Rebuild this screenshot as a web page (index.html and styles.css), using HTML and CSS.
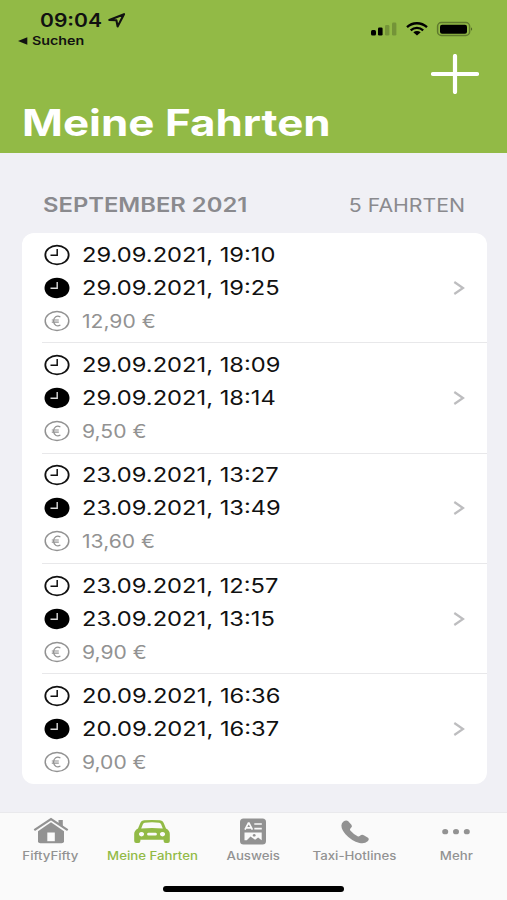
FILE: index.html
```
<!DOCTYPE html>
<html lang="de">
<head>
  <meta charset="UTF-8">
  <meta name="viewport" content="width=device-width, initial-scale=1.0">
  <title>Meine Fahrten</title>
  <link rel="stylesheet" href="styles.css">
</head>
<body>

  <svg class="hidden">
    <symbol id="clock" viewBox="0 0 26 22">
      <ellipse cx="13" cy="11" rx="11.7" ry="9.4" fill="none" stroke="#111" stroke-width="1.8"/>
      <path d="M13.2 5v6.200H6.500" fill="none" stroke="#111" stroke-width="1.500"/>
    </symbol>
    <symbol id="clock-full" viewBox="0 0 26 22">
      <ellipse cx="13" cy="11" rx="12.5" ry="10.2" fill="#000"/>
      <path d="M13.2 5v6.200H6.500" fill="none" stroke="#ddd" stroke-width="1.400"/>
    </symbol>
    <symbol id="euro" viewBox="0 0 26 22">
      <ellipse cx="13" cy="11" rx="11.8" ry="9.5" fill="none" stroke="#929292" stroke-width="1.5"/>
      <path d="M16.400 7C12.900 4.800 9.600 7.200 9.600 11s3.300 6.200 6.800 4M7.800 10h7M7.800 12.200h7" fill="none" stroke="#929292" stroke-width="1.200"/>
    </symbol>
    <symbol id="arrow" viewBox="0 0 12 16">
      <path d="M1.300 2l8.700 6-8.700 6" fill="none" stroke="#bdbdbf" stroke-width="2.200"/>
    </symbol>
  </svg>

  <header class="header">
    <div class="status">
      <div class="status-left">
        <div class="time">
          <span class="wide time-text">09:04</span>
          <svg width="18" height="15" viewBox="0 0 18 15"><path d="M1.300 7L16 1.200 9.600 13.400 8.400 7.300z" fill="none" stroke="#111" stroke-width="2.100" stroke-linejoin="round"/></svg>
        </div>
        <div class="back">
          <svg width="10" height="8" viewBox="0 0 10 8"><path d="M0 4L9.300.3v7.400z" fill="#111"/></svg>
          <span class="wide back-text">Suchen</span>
        </div>
      </div>
      <svg class="status-icons" width="104" height="16" viewBox="0 0 104 16">
        <rect x="1" y="9" width="5" height="5.500" rx="1.500"/>
        <rect x="8" y="6.500" width="4.600" height="8" rx="1.300"/>
        <rect x="15" y="4" width="4.400" height="10.500" rx="1.300" opacity=".2"/>
        <rect x="22" y="1.500" width="4.400" height="13" rx="1.300" opacity=".2"/>
        <g fill="none" stroke="#000" stroke-width="2.300">
          <path d="M37 6.200C42.500.9 51.300.9 57 6.200"/>
          <path d="M40.700 9.300C44.300 6.100 49.500 6.100 53.200 9.300"/>
        </g>
        <path d="M43.300 11.200Q47 8.600 50.700 11.200L47 14.600z"/>
        <rect x="67.600" y="1.600" width="32" height="12.800" rx="3.700" fill="none" stroke="#000" stroke-width="1.500" opacity=".35"/>
        <rect x="70" y="3.700" width="27" height="9" rx="2"/>
        <path d="M101 6.200q2.400 1.800 0 3.600z" opacity=".45"/>
      </svg>
    </div>
    <svg class="add" width="48" height="40" viewBox="0 0 48 40"><path d="M2 20h44M24 2v36" stroke="#fff" stroke-width="4.200" stroke-linecap="round"/></svg>
    <h1><span class="wide title-text">Meine Fahrten</span></h1>
  </header>

  <main>
    <div class="month">
      <h2><span class="wide month-text">SEPTEMBER 2021</span></h2>
      <span class="wide count">5 FAHRTEN</span>
    </div>

    <ul class="trips">
      <li class="trip">
        <div class="info">
          <div class="line"><svg><use href="#clock"/></svg><span class="wide date">29.09.2021, 19:10</span></div>
          <div class="line"><svg><use href="#clock-full"/></svg><span class="wide date">29.09.2021, 19:25</span></div>
          <div class="line"><svg><use href="#euro"/></svg><span class="wide price">12,90 €</span></div>
        </div>
        <svg class="arrow"><use href="#arrow"/></svg>
      </li>
      <li class="trip">
        <div class="info">
          <div class="line"><svg><use href="#clock"/></svg><span class="wide date">29.09.2021, 18:09</span></div>
          <div class="line"><svg><use href="#clock-full"/></svg><span class="wide date">29.09.2021, 18:14</span></div>
          <div class="line"><svg><use href="#euro"/></svg><span class="wide price">9,50 €</span></div>
        </div>
        <svg class="arrow"><use href="#arrow"/></svg>
      </li>
      <li class="trip">
        <div class="info">
          <div class="line"><svg><use href="#clock"/></svg><span class="wide date">23.09.2021, 13:27</span></div>
          <div class="line"><svg><use href="#clock-full"/></svg><span class="wide date">23.09.2021, 13:49</span></div>
          <div class="line"><svg><use href="#euro"/></svg><span class="wide price">13,60 €</span></div>
        </div>
        <svg class="arrow"><use href="#arrow"/></svg>
      </li>
      <li class="trip">
        <div class="info">
          <div class="line"><svg><use href="#clock"/></svg><span class="wide date">23.09.2021, 12:57</span></div>
          <div class="line"><svg><use href="#clock-full"/></svg><span class="wide date">23.09.2021, 13:15</span></div>
          <div class="line"><svg><use href="#euro"/></svg><span class="wide price">9,90 €</span></div>
        </div>
        <svg class="arrow"><use href="#arrow"/></svg>
      </li>
      <li class="trip">
        <div class="info">
          <div class="line"><svg><use href="#clock"/></svg><span class="wide date">20.09.2021, 16:36</span></div>
          <div class="line"><svg><use href="#clock-full"/></svg><span class="wide date">20.09.2021, 16:37</span></div>
          <div class="line"><svg><use href="#euro"/></svg><span class="wide price">9,00 €</span></div>
        </div>
        <svg class="arrow"><use href="#arrow"/></svg>
      </li>
    </ul>
  </main>

  <footer class="footer">
    <nav class="tabs">
      <a class="tab">
        <svg width="36" height="28" viewBox="0 0 36 28">
          <path d="M1.300 13.200L18 2l16.700 11.200" fill="none" stroke="currentColor" stroke-width="2.200"/>
          <path d="M25.500 3h4.300v6.900l-4.300-2.900z" fill="currentColor"/>
          <path d="M5 14.200L18 5.300l13 8.900v10q0 2-2.400 2H7.400q-2.400 0-2.400-2z" fill="currentColor"/>
          <rect x="14.300" y="15.500" width="7.500" height="8.700" fill="#fafafa"/>
        </svg>
        <span class="wide tab-text">FiftyFifty</span>
      </a>
      <a class="tab active">
        <svg width="36" height="28" viewBox="0 0 36 28">
          <path fill="currentColor" fill-rule="evenodd" d="M10 3.300Q18 2.500 26 3.300q2.700.3 3.600 2.500l2.400 5.800q3.800 2 3.800 5.500v7q0 2-2 2h-2.200q-2 0-2-2v-1.300H6.400v1.300q0 2-2 2H2.200q-2 0-2-2v-7q0-3.500 3.800-5.500l2.400-5.800Q7.300 3.600 10 3.300zM10.800 5.700Q9.500 5.900 9 7L7.200 11.400Q18 10.400 28.800 11.400L27 7Q26.500 5.900 25.200 5.700 18 5 10.800 5.700zM7.500 15a2.600 2.200 0 1 0 .01 0zM28.500 15a2.600 2.200 0 1 0 .01 0zM14.500 15.800q-1.400 0-1.400 1.400t1.400 1.400h7q1.400 0 1.400-1.400t-1.400-1.400z"/>
        </svg>
        <span class="wide tab-text">Meine Fahrten</span>
      </a>
      <a class="tab">
        <svg width="36" height="28" viewBox="0 0 36 28">
          <rect x="5" y="1.500" width="26" height="26" rx="3.500" fill="currentColor"/>
          <g fill="none" stroke="#fafafa" stroke-width="1.700">
            <path d="M10 12.600L13.400 6h.6l3.400 6.600M11.400 10.800h4.600M19.300 7h7.500M19.300 11.600h7.500"/>
          </g>
          <path fill="#fafafa" fill-rule="evenodd" d="M9.500 15.500h17.200v7.700l-3.600-2.600-3 2.100-4.600-3.200-3.700 3.700H9.500zM19.200 17a1.500 1.300 0 1 0 .01 0z"/>
        </svg>
        <span class="wide tab-text">Ausweis</span>
      </a>
      <a class="tab">
        <svg width="36" height="28" viewBox="0 0 36 28">
          <path fill="currentColor" d="M6.500 4.600Q9 2.600 11 4l3.600 4.100Q15.800 9.700 13.400 11.600 12.500 12.500 13.300 13.500 16.300 17 20.600 19.200 21.800 19.700 22.700 18.900 24.900 17.200 26.800 18.200L31 20.700Q32.700 22 30.700 24.300 27.600 27.200 22.500 26 14.400 23.800 8.500 17.200 4.500 12.600 4.400 8.500 4.500 6.200 6.500 4.600z"/>
        </svg>
        <span class="wide tab-text">Taxi-Hotlines</span>
      </a>
      <a class="tab">
        <svg width="36" height="28" viewBox="0 0 36 28">
          <g fill="currentColor">
            <ellipse cx="7.200" cy="14.700" rx="3" ry="2.600"/>
            <ellipse cx="18" cy="14.700" rx="3" ry="2.600"/>
            <ellipse cx="28.800" cy="14.700" rx="3" ry="2.600"/>
          </g>
        </svg>
        <span class="wide tab-text">Mehr</span>
      </a>
    </nav>
    <div class="home-bar"></div>
  </footer>

</body>
</html>
```
FILE: styles.css
```
* { box-sizing: border-box; }
body {
  margin: 0;
  height: 900px;
  display: flex;
  flex-direction: column;
  overflow: hidden;
  background: #f0f0f5;
  color: #111;
  font-family: Inter, "Liberation Sans", sans-serif;
}
h1, h2, ul {
  margin: 0;
  padding: 0;
}
.hidden {
  position: absolute;
  width: 0;
  height: 0;
}
/* stretched lettering */
.wide {
  display: inline-block;
  white-space: nowrap;
  transform: scaleX(1.15);
  transform-origin: left center;
}
.header {
  height: 153px;
  display: flex;
  flex-direction: column;
  background: #92ba46;
}
.status {
  display: flex;
  justify-content: space-between;
  height: 54px;
  padding: 9px 33px 0 18px;
}
.time {
  display: flex;
  align-items: center;
  height: 22px;
  padding-left: 22px;
}
.time-text {
  width: 68px;
  font-size: 18px;
  font-weight: 600;
  transform: scaleX(1.17);
}
.back {
  display: flex;
  align-items: center;
  height: 19px;
}
.back-text {
  margin-left: 4px;
  font-size: 12px;
  font-weight: 600;
  transform: scaleX(1.19);
}
.status-icons {
  margin-top: 12px;
}
.add {
  align-self: flex-end;
  margin-right: 28px;
}
h1 {
  height: 44px;
  margin-top: 7px;
  padding-left: 22px;
  color: #fff;
  font-size: 37px;
  line-height: 44px;
  font-weight: 700;
}
.title-text {
  transform: scaleX(1.187);
}
main {
  flex: 1;
  padding: 32px 20px 0 22px;
}
.month {
  display: flex;
  justify-content: space-between;
  height: 48px;
  padding: 8px 22px 0 21px;
  color: #8a8a8e;
  line-height: 24px;
}
h2 {
  font-size: 19.5px;
  font-weight: 600;
}
.month-text {
  transform: scaleX(1.22);
}
.count {
  font-size: 18.5px;
  transform-origin: right center;
}
.trips {
  height: 551px;
  width: 465px;
  list-style: none;
  background: #fff;
  border-radius: 12px;
}
.trip {
  height: 110.3px;
  display: flex;
  align-items: center;
  margin-left: 20px;
  padding-right: 22px;
  border-bottom: 1px solid #e8e8ea;
}
.trip:last-child {
  border-bottom: none;
}
.info {
  flex: 1;
}
.line {
  display: flex;
  align-items: center;
  height: 33px;
}
.line svg {
  width: 26px;
  height: 22px;
  margin: 0 12px 0 2px;
}
.date {
  font-size: 20px;
  transform: scaleX(1.185);
}
.price {
  color: #929292;
  font-size: 18.5px;
  transform: scaleX(1.14);
}
.arrow {
  width: 12px;
  height: 16px;
}
.footer {
  height: 88px;
  display: flex;
  flex-direction: column;
  align-items: center;
  background: #fafafa;
  border-top: 1px solid #e9e9ec;
}
.tabs {
  width: 100%;
  display: grid;
  grid-template-columns: repeat(5, 1fr);
}
.tab {
  display: flex;
  flex-direction: column;
  align-items: center;
  padding-top: 4px;
  color: #929292;
}
.tab-text {
  margin-top: 3px;
  font-size: 11.5px;
  line-height: 16px;
  font-weight: 500;
  transform-origin: center;
}
.active {
  color: #92ba46;
}
.home-bar {
  width: 181px;
  height: 6px;
  margin-top: 22px;
  border-radius: 3px;
  background: #000;
}
```
